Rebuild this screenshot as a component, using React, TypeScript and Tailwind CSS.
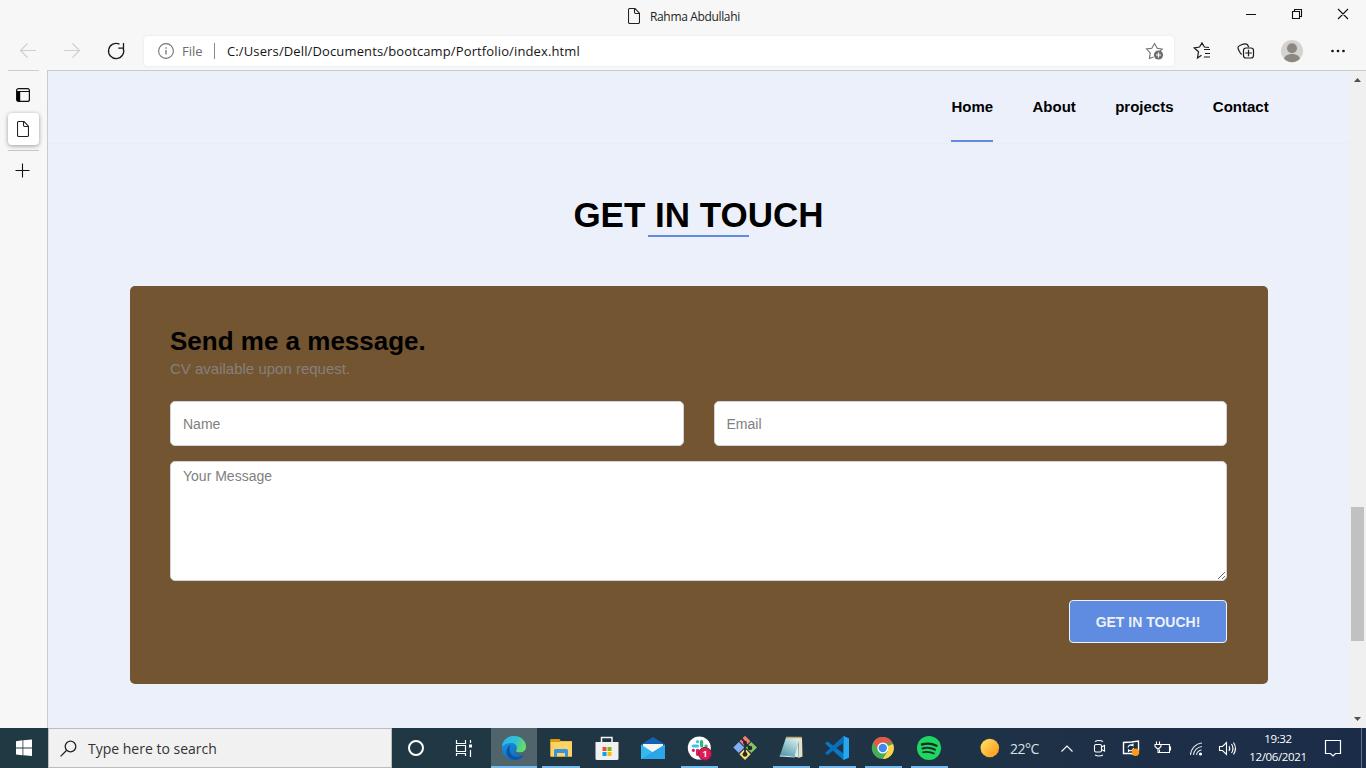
import React from "react";

const UI = "font-['Open_Sans','Noto_Sans',sans-serif]";

function PageIcon() {
  return (
    <svg className="h-4 w-3 shrink-0" viewBox="0 0 12 16" fill="none" stroke="#222" strokeWidth="1.1">
      <path d="M1.7.5H7l4.5 4.7v9.100a1.200 1.200 0 0 1-1.200 1.200H1.700A1.200 1.200 0 0 1 .5 14.300V1.700A1.200 1.200 0 0 1 1.700.5zM6.500.5v3.800a1.200 1.200 0 0 0 1.200 1.200h3.800" />
    </svg>
  );
}

function TitleBar() {
  return (
    <header className="flex h-8 shrink-0 items-center">
      <div className="ml-[628px] flex items-center gap-[10px]">
        <PageIcon />
        <span className={`${UI} pt-[2px] text-[12px] tracking-[-0.350px] text-[#222]`}>Rahma Abdullahi</span>
      </div>
      <svg className="ml-auto mr-[12px] h-8 w-[110px]" viewBox="-4 0 110 32" fill="none" stroke="#111" strokeWidth="1.1">
        <path d="M-2 14.500h10M44.500 11.500h7v7h-7zM46.500 11V9.500h7v7H52M90 9l10 10M100 9L90 19" />
      </svg>
    </header>
  );
}

function Toolbar() {
  return (
    <div className="flex h-[38px] shrink-0 items-center">
      <svg className="h-[38px] w-[144px]" viewBox="0 0 144 38" fill="none">
        <path d="M36 18.500H20.500M27.500 11.500l-7 7 7 7M64 18.500h15.500M72.500 11.500l7 7-7 7" stroke="#cfcfcf" strokeWidth="1.200" />
        <path d="M123.300 16.500A7.600 7.600 0 1 1 119.500 12.200M123.500 11v5.200h-5.200" stroke="#1b1b1b" strokeWidth="1.300" />
      </svg>
      <div className={`flex h-[30px] w-[1030px] items-center rounded-[4px] bg-white shadow-[0_0_3px_rgba(0,0,0,0.08)] ${UI}`}>
        <svg className="ml-[14px] h-4 w-4" viewBox="0 0 16 16" fill="none" stroke="#757575" strokeWidth="1.100">
          <circle cx="8" cy="8" r="7.400" />
          <path d="M8 7v4.500M8 4.300v1.500" strokeWidth="1.300" />
        </svg>
        <span className="ml-[8px] w-[24px] pt-px text-[13px] text-[#6d6d6d]">File</span>
        <span className="ml-[8px] h-4 w-px bg-[#8a8a8a]" />
        <span className="ml-[12px] pt-px text-[13px] tracking-[0.130px] whitespace-nowrap text-[#151515]">C:/Users/Dell/Documents/bootcamp/Portfolio/index.html</span>
        <svg className="ml-auto mr-[9px] h-[18px] w-[20px]" viewBox="0 0 20 18" fill="none">
          <path d="M8.500 15l-4 1.500.700-5.500L1.500 7l5.300-.800L9.500 1.500l2.700 4.700 5 .800-2.700 2.500" stroke="#707070" strokeWidth="1.100" />
          <circle cx="13.500" cy="13" r="4.600" fill="#6e6e6e" />
          <path d="M11 13h5M13.500 10.500v5" stroke="#fff" strokeWidth="1.200" />
        </svg>
      </div>
      <svg className="h-[38px] w-[192px]" viewBox="0 0 192 38" fill="none" stroke="#1b1b1b" strokeWidth="1.200">
        <path d="M27.500 23.300l-4 2.700 1-6.300-4.300-3.900 5.300-.8L28 11l2.400 4 4.600.5M30 17.500h6M31 21.500h5M29.500 25.500h.1M30 25h6" />
        <path d="M67.800 22.500c-1.500-.800-4-5.400-3.800-7 .200-1.500 1.500-1.800 3-2.500 2.500-1.200 5-1.700 6.500-.300l1.200 2.600" />
        <rect x="69.500" y="16" width="10" height="10" rx="2.500" />
        <path d="M74.500 17.700v6.600M71.200 21h6.600" />
        <circle cx="118" cy="19" r="11" fill="#d5d3d0" stroke="none" />
        <circle cx="118" cy="16.300" r="5" fill="#8c8783" stroke="none" />
        <path d="M110 26.700c1.500-6.300 14.500-6.300 16 0a11 11 0 0 1-16 0z" fill="#8c8783" stroke="none" />
        <g fill="#111" stroke="none"><circle cx="158.500" cy="19" r="1.350" /><circle cx="164" cy="19" r="1.350" /><circle cx="169.500" cy="19" r="1.350" /></g>
      </svg>
    </div>
  );
}

function Sidebar() {
  return (
    <aside className="flex w-[47px] shrink-0 flex-col items-center">
      <div className="h-px w-[31px] bg-[#cecece]" />
      <svg className="mt-[17px] mr-px h-[14px] w-[14px]" viewBox="0 0 14 14" fill="none" stroke="#111">
        <rect x=".6" y=".6" width="12.800" height="12.800" rx="2" strokeWidth="1.200" />
        <path d="M.5 3.500h13" />
        <path d="M1 3.500h3.200v10H2A1.500 1.500 0 0 1 1 12z" fill="#000" stroke="none" />
      </svg>
      <div className="mt-[11px] flex h-8 w-[31px] items-center justify-center rounded-[4px] bg-white pr-px shadow-[0_1px_4px_rgba(0,0,0,0.38)]">
        <PageIcon />
      </div>
      <div className="mt-[5px] h-px w-[31px] bg-[#c6c6c6]" />
      <svg className="mt-[12px] mr-[2px] h-[15px] w-[15px]" viewBox="0 0 15 15" stroke="#111" strokeWidth="1.100">
        <path d="M.5 7.500h14M7.500.5v14" />
      </svg>
    </aside>
  );
}

function Page() {
  return (
    <main className="flex min-w-0 flex-1 flex-col bg-[#ecf0fa] font-['Liberation_Sans',Arial,sans-serif]">
      <nav className="flex h-[73px] shrink-0 justify-end gap-[39.350px] border-b border-[#ebecef] pr-[80.300px] text-[15px] leading-[72px] font-bold text-black">
        <a className="h-[71px] border-b-2 border-[#5f8be0]">Home</a>
        <a>About</a>
        <a>projects</a>
        <a>Contact</a>
      </nav>
      <section className="flex flex-col">
        <div className="mt-[50px] flex flex-col items-center">
          <h2 className="h-[42px] text-[35px] leading-[41px] font-bold whitespace-nowrap text-black">GET IN TOUCH</h2>
          <div className="-mt-px mr-[1px] mb-px h-[2px] w-[101px] bg-[#5f8be0]" />
        </div>
        <form className="mt-[48px] ml-[82px] flex h-[398px] w-[1138px] flex-col rounded-[5px] bg-[#735531] px-[40px] pt-[40px]">
          <h3 className="h-[30px] text-[26px] leading-[31px] font-bold text-black">Send me a message.</h3>
          <p className="text-[15px] leading-[26px] text-[#85807c]">CV available upon request.</p>
          <div className="mt-[19px] flex gap-[30px] pr-px">
            <input className="h-[45px] w-0 flex-1 rounded-[5px] border border-[#ced4da] bg-white px-3 text-[14px] placeholder:text-[#808080]" placeholder="Name" />
            <input className="h-[45px] w-0 flex-1 rounded-[5px] border border-[#ced4da] bg-white px-3 text-[14px] placeholder:text-[#808080]" placeholder="Email" />
          </div>
          <textarea className="mt-[15px] block h-[120px] w-[1057px] rounded-[5px] border border-[#ced4da] bg-white px-3 py-1 text-[14px] leading-[21px] placeholder:text-[#808080]" placeholder="Your Message" />
          <button className="mt-[19px] mr-px h-[43px] w-[158px] self-end rounded-[4px] border border-[#eef2fb] bg-[#5f8be0] pt-[2px] text-[14px] font-bold whitespace-nowrap text-[#edf1fb]">GET IN TOUCH!</button>
        </form>
      </section>
    </main>
  );
}

function Scrollbar() {
  return (
    <div className="flex w-[17px] shrink-0 flex-col items-center bg-[#f0f0f0]">
      <svg className="h-[17px] w-[17px]" viewBox="0 0 17 17"><path d="M5 11h7L8.500 7z" fill="#505050" /></svg>
      <div className="mt-[419px] h-[134px] w-[13px] bg-[#c1c1c1]" />
      <svg className="mt-auto h-[17px] w-[17px]" viewBox="0 0 17 17"><path d="M5 6h7L8.500 10z" fill="#505050" /></svg>
    </div>
  );
}

function Task({ children, open, active, wide }: { children?: React.ReactNode; open?: boolean; active?: boolean; wide?: boolean }) {
  return (
    <div className={`flex h-10 w-[46px] shrink-0 flex-col items-center ${active ? "mr-px ml-[6px] bg-[#50646b]" : ""}`}>
      <svg className="h-[38px] w-[46px]" viewBox="0 0 46 38" fill="none">{children}</svg>
      {open && <div className={`h-[2px] bg-[#76b9ed] ${active ? "w-[46px]" : wide ? "w-[38px]" : "w-[37px]"}`} />}
    </div>
  );
}

function Taskbar() {
  return (
    <footer className="flex h-10 shrink-0 items-center bg-linear-to-r from-[#203a43] via-[#203544] via-55% to-[#1b2c49] text-white">
      <svg className="h-10 w-12" viewBox="0 0 48 40" fill="#fff"><path d="M16 13.300l6.500-1v7.200H16zM23.300 12.200L32 11.500v8h-8.700zM16 20.400h6.500v6.900L16 26.400zM23.300 20.400H32V28l-8.700-.7z" /></svg>
      <div className="flex h-10 w-[344px] items-center border border-[#bdbdbd] bg-[#f1f1f1]">
        <svg className="ml-[11px] h-[17px] w-[17px]" viewBox="0 0 17 17" fill="none" stroke="#222" strokeWidth="1.300"><circle cx="10.500" cy="6.500" r="5.300" /><path d="M6.700 10.300L.6 16.400" /></svg>
        <span className={`${UI} ml-[11px] whitespace-nowrap text-[14px] text-[#333]`}>Type here to search</span>
      </div>
      <div className="ml-px flex">
        <Task><circle cx="23" cy="20" r="7" stroke="#fff" strokeWidth="2" /></Task>
        <Task><path d="M17.500 12v3.500h9V12M17.500 17.500h9v6h-9zM17.500 28v-2.500h9V28M31.500 12v3M31.500 22v7" stroke="#fff" strokeWidth="1.200" /><path d="M30 16.500h3v3h-3z" fill="#fff" /></Task>
        <Task open active>
          <defs>
            <linearGradient id="edgeTop" x1="0" y1=".3" x2="1" y2=".6"><stop stopColor="#2bb5ec" /><stop offset=".55" stopColor="#34c2cc" /><stop offset="1" stopColor="#72e052" /></linearGradient>
            <linearGradient id="edgeLeft" x1="0" y1="0" x2=".6" y2="1"><stop stopColor="#1d9be5" /><stop offset="1" stopColor="#0b6bc9" /></linearGradient>
          </defs>
          <circle cx="23" cy="20" r="12" fill="url(#edgeLeft)" />
          <path d="M11 19C11.500 12 17 8 23 8c7 0 12 5 12 10.500 0 4-3 6-6.500 6-3 0-4.500-1.300-3.500-2.300 2-2.500.5-7.200-4.500-7.200-4 0-8 1.500-9.500 4z" fill="url(#edgeTop)" />
          <path d="M18.500 21c0 6 5 9 10 8 2.200-.4 4-1.500 4.800-2.400C31 30.500 27 32 23.500 32 18.500 31.500 15.500 28 15.500 24c0-3 2-6.500 5-7.500-1.300 1-2 2.500-2 4.500z" fill="#1152a0" />
          <path d="M25 22.200c-1 1 .5 2.300 3.500 2.300 2.500 0 4.500-.8 5.800-2.300l1.200.2-1.500 4c-1.500.8-3.300 1.200-5 .9-4-.7-6-3.500-5.500-6 .5-1.500 2.500-.6 1.500.9z" fill="#50646b" />
        </Task>
        <Task open wide>
          <path d="M12.500 11h7l2 2H34v16H12.500z" fill="#e5a420" /><path d="M12.500 13.500H34V28H12.500z" fill="#fdd368" /><path d="M12.500 11h9l1 1.500-1 1.500h-9z" fill="#dc9a0c" /><path d="M16 29v-6.500a1.500 1.500 0 0 1 1.500-1.500h11a1.500 1.500 0 0 1 1.500 1.500V29h-3v-4h-8v4z" fill="#3793dd" />
        </Task>
        <Task><path d="M17.500 15V9.500h10.500V15" stroke="#f3f3f3" strokeWidth="1.500" /><path d="M11.500 14H34.500v16.500a1.500 1.500 0 0 1-1.500 1.500H13a1.500 1.500 0 0 1-1.500-1.500z" fill="#f0f0f0" /><path d="M18.500 19h4v4h-4z" fill="#f25022" /><path d="M23.500 19h4v4h-4z" fill="#7fba00" /><path d="M18.500 24h4v4h-4z" fill="#00a4ef" /><path d="M23.500 24h4v4h-4z" fill="#ffb900" /></Task>
        <Task><path d="M11 16.500L23 9l12 7.500v6H11z" fill="#1461b4" /><path d="M13 16h20v8l-10 2-10-2z" fill="#f4f4f4" /><path d="M11 16.500l11 7.200L35 31H11z" fill="#35b9f1" /><path d="M35 16.500V31H11z" fill="#2ba6e9" /></Task>
        <Task open>
          <circle cx="23.300" cy="20" r="11.500" fill="#fff" />
          <g strokeWidth="3.200" strokeLinecap="round"><path d="M21.500 13.500v.2M17.300 18h4.200" stroke="#36c5f0" /><path d="M25.600 13.500V18M30 18h.1" stroke="#2eb67d" /><path d="M21.500 22.300v4M17.300 22.300h.1" stroke="#e01e5a" /><path d="M25.800 22.300h3" stroke="#ecb22e" /></g>
          <circle cx="29" cy="25.800" r="6.400" fill="#dc1b58" stroke="#8e1742" /><text x="29" y="29.300" textAnchor="middle" fontFamily="Noto Sans, sans-serif" fontSize="9.500" fontWeight="600" fill="#fff">1</text>
        </Task>
        <Task>
          <path d="M23 7.800l5.500 5.500-5.500 5.500-5.500-5.500z" fill="#f47d7a" /><path d="M16.800 14l5.500 5.500-5.500 5.500-5.500-5.500z" fill="#80aefa" /><path d="M29.300 14l5.700 5.500-5.700 5.500-5.500-5.500z" fill="#82c75f" /><path d="M23 20.500l5.700 5.700L23 32l-5.700-5.800z" fill="#f9df6b" /><path d="M19 10l4 4v12M23 15l5 5" stroke="#222f38" strokeWidth="1.800" /><circle cx="23" cy="14.800" r="2" fill="#282828" /><circle cx="28" cy="20" r="2.300" fill="#282828" /><circle cx="23" cy="26.300" r="2.400" fill="#282828" />
        </Task>
        <Task open><defs><linearGradient id="pad" x1=".8" y1="0" x2=".2" y2="1"><stop stopColor="#e1f0f0" /><stop offset="1" stopColor="#4f9aab" /></linearGradient></defs><path d="M31 10l3-.5.5 19-4 1.500z" fill="#e6dfc8" /><path d="M30.500 12v17.500L26 28.500z" fill="#dcebee" /><path d="M18 9.500L32 10l-5.500 18.500-14.500-1z" fill="url(#pad)" /><path d="M12 27.300l14.500 1.200.5 1-15.500-1z" fill="#d7e2e4" /><path d="M18 9.500h15.500" stroke="#bda86c" strokeWidth="1.500" /></Task>
        <Task open><path d="M29.500 8L35 10.500v19L29.500 32 11 15.500l2.500-2 16 12z" fill="#0879c5" /><path d="M29.500 8L35 10.500v19L29.500 32z" fill="#25a7f1" /><path d="M29.500 14.500L13.500 27l-2.500-2L29.500 8z" fill="#0870bb" /></Task>
        <Task open><circle cx="22.800" cy="20" r="11" fill="#45ad58" /><path d="M22.800 20l10.300-4a11 11 0 0 1-10.300 15l5-8z" fill="#ffd447" /><path d="M13.300 14.500A11 11 0 0 1 32.500 15h-9.700l-5 6z" fill="#e85648" /><circle cx="22.800" cy="20" r="5.500" fill="#fff" /><circle cx="22.800" cy="20" r="4.200" fill="#4388f1" /></Task>
        <Task open><circle cx="23" cy="20" r="12" fill="#1ed760" /><g stroke="#182b2a" strokeLinecap="round"><path d="M16 16.500c5-1.500 10-1 14.500 1.300" strokeWidth="2.400" /><path d="M16.500 20.500c4.500-1.200 8.500-.8 12.500 1.200" strokeWidth="2" /><path d="M17 24.300c4-1 7.500-.6 11 1.100" strokeWidth="1.700" /></g></Task>
      </div>
      <svg className="ml-[28px] h-10 w-[20px] shrink-0" viewBox="0 0 20 40"><defs><linearGradient id="sun" x1="0" y1="0" x2="1" y2="1"><stop stopColor="#ffe36d" /><stop offset="1" stopColor="#ff9410" /></linearGradient></defs><circle cx="9.800" cy="20" r="9.300" fill="url(#sun)" /></svg>
      <span className={`${UI} ml-[10px] w-[30px] text-[14px] tracking-[-0.5px] whitespace-nowrap text-[#dce1e8]`}>22°C</span>
      <svg className="ml-[20px] h-10 w-[180px] shrink-0" viewBox="1060 728 180 40" fill="none" stroke="#fff" strokeWidth="1.100">
        <path d="M1061.500 751.500l5.500-5.500 5.500 5.500" />
        <rect x="1094.500" y="744.500" width="7" height="7.500" rx="1.500" /><path d="M1101.500 747l3-1.500v5.500l-3-1.500M1095 741.500q4-2 8 0M1095 755q4 2 8 0" />
        <path d="M1138.500 751v-10l-7 1-8 .5v11h7l5 1" strokeWidth="1.400" /><path d="M1128 747.500a3 3 0 0 1 5-2v-2M1133.500 745.500h-3M1133.500 748a3 3 0 0 1-5 2v2" /><circle cx="1135.500" cy="752.300" r="3.700" fill="#ff9b12" stroke="none" />
        <path d="M1161.500 744.500h8v8h-10v-3M1170.500 746.500v4M1156.500 741.500v3M1159.500 741.500v3M1155 744.500h6v2l-2 2h-2l-2-2zM1158 748.500v4h2" />
        <path d="M1190.500 755a12.500 12.500 0 0 1 11.500-12M1193.500 755a9.500 9.500 0 0 1 8.500-8.500M1196.500 755a6 6 0 0 1 5-5" stroke="#dce3eb" /><circle cx="1200.500" cy="754" r="1.600" fill="#fff" stroke="none" />
        <path d="M1219.500 746.500h3l4-4v12l-4-4h-3zM1229 746q1.500 2.500 0 5M1231.500 744q3 4.500 0 9M1233.500 742.500q4 6 0 12" />
      </svg>
      <div className={`${UI} ml-[5px] w-[66px] shrink-0 text-center text-[11.500px] leading-[18px] tracking-[-0.350px] whitespace-nowrap`}>19:32<br />12/06/2021</div>
      <svg className="ml-[12px] h-10 w-[20px] shrink-0" viewBox="0 0 20 40" fill="none" stroke="#fff" strokeWidth="1.200"><path d="M2.500 12.500h15v13h-5L10 28l-2.500-2.500h-5z" /></svg>
      <div className="ml-auto mr-[4px] h-10 w-px bg-[#62718a]" />
    </footer>
  );
}

export default function App() {
  return (
    <div className="flex h-[768px] w-[1366px] flex-col overflow-hidden bg-[#f7f7f7]">
      <TitleBar />
      <Toolbar />
      <div className="flex min-h-0 flex-1">
        <Sidebar />
        <div className="flex min-w-0 flex-1 border-t border-l border-[#cbcbcb]">
          <Page />
          <Scrollbar />
        </div>
      </div>
      <Taskbar />
    </div>
  );
}
